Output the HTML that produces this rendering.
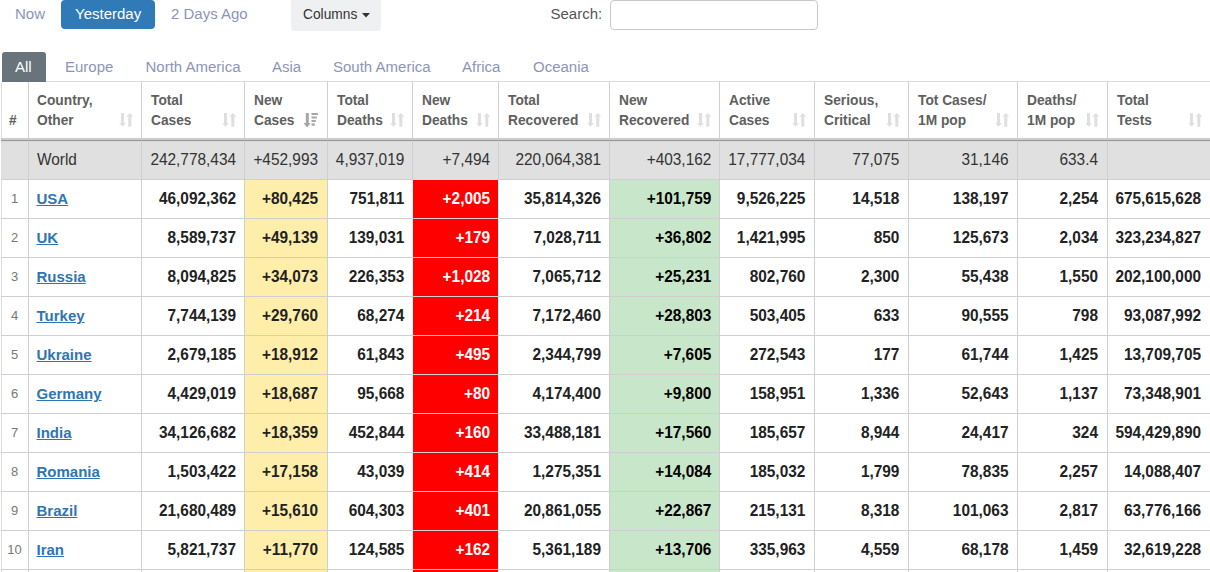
<!DOCTYPE html>
<html><head><meta charset="utf-8"><title>table</title>
<style>
html,body{margin:0;padding:0;background:#fff;}
body{width:1210px;height:572px;overflow:hidden;position:relative;font-family:"Liberation Sans",sans-serif;}
.a{position:absolute;white-space:nowrap;}
u{text-decoration:underline;text-underline-offset:1px;}
</style></head><body>
<div class="a" style="left:15px;top:5.30px;font-size:15px;line-height:18px;color:#8e94b8;font-weight:normal;transform:scaleY(1.03);transform-origin:0 14.20px;">Now</div>
<div class="a" style="left:61px;top:0px;width:94px;height:29px;background:#2f7ab7;border-radius:4px"></div>
<div class="a" style="left:75px;top:5.30px;font-size:15px;line-height:18px;color:#fff;font-weight:normal;transform:scaleY(1.03);transform-origin:0 14.20px;">Yesterday</div>
<div class="a" style="left:171px;top:5.30px;font-size:15px;line-height:18px;color:#8e94b8;font-weight:normal;transform:scaleY(1.03);transform-origin:0 14.20px;">2 Days Ago</div>
<div class="a" style="left:291px;top:-4px;width:90px;height:35px;background:#eff0f1;border-radius:4px"></div>
<div class="a" style="left:303px;top:7.24px;font-size:13.75px;line-height:16px;color:#333;font-weight:normal;transform:scaleY(1.03);transform-origin:0 12.76px;">Columns</div>
<svg class="a" style="left:362px;top:13px" width="8" height="5"><polygon points="0,0 8,0 4,4.5" fill="#333"/></svg>
<div class="a" style="left:550.5px;top:4.80px;font-size:15px;line-height:18px;color:#555;font-weight:normal;transform:scaleY(1.03);transform-origin:0 14.20px;">Search:</div>
<div class="a" style="left:610px;top:0px;width:206px;height:28px;border:1px solid #c8c8c8;border-radius:4px;background:#fff"></div>
<div class="a" style="left:2px;top:52px;width:44px;height:30px;background:#68737b;border-radius:3px 3px 0 0"></div>
<div class="a" style="left:15px;top:57.80px;font-size:15px;line-height:18px;color:#fff;font-weight:normal;transform:scaleY(1.03);transform-origin:0 14.20px;">All</div>
<div class="a" style="left:65px;top:57.80px;font-size:15px;line-height:18px;color:#8e94b8;font-weight:normal;transform:scaleY(1.03);transform-origin:0 14.20px;">Europe</div>
<div class="a" style="left:145.5px;top:57.80px;font-size:15px;line-height:18px;color:#8e94b8;font-weight:normal;transform:scaleY(1.03);transform-origin:0 14.20px;">North America</div>
<div class="a" style="left:272px;top:57.80px;font-size:15px;line-height:18px;color:#8e94b8;font-weight:normal;transform:scaleY(1.03);transform-origin:0 14.20px;">Asia</div>
<div class="a" style="left:333px;top:57.80px;font-size:15px;line-height:18px;color:#8e94b8;font-weight:normal;transform:scaleY(1.03);transform-origin:0 14.20px;">South America</div>
<div class="a" style="left:462px;top:57.80px;font-size:15px;line-height:18px;color:#8e94b8;font-weight:normal;transform:scaleY(1.03);transform-origin:0 14.20px;">Africa</div>
<div class="a" style="left:533px;top:57.80px;font-size:15px;line-height:18px;color:#8e94b8;font-weight:normal;transform:scaleY(1.03);transform-origin:0 14.20px;">Oceania</div>
<div class="a" style="left:1px;top:141px;width:1209px;height:38px;background:#e0e0e0;"></div>
<div class="a" style="left:245px;top:180px;width:82px;height:38px;background:#ffeeaa;"></div>
<div class="a" style="left:413px;top:180px;width:85px;height:38px;background:#ff0000;"></div>
<div class="a" style="left:610px;top:180px;width:109px;height:38px;background:#c8e6c9;"></div>
<div class="a" style="left:245px;top:219px;width:82px;height:38px;background:#ffeeaa;"></div>
<div class="a" style="left:413px;top:219px;width:85px;height:38px;background:#ff0000;"></div>
<div class="a" style="left:610px;top:219px;width:109px;height:38px;background:#c8e6c9;"></div>
<div class="a" style="left:245px;top:258px;width:82px;height:38px;background:#ffeeaa;"></div>
<div class="a" style="left:413px;top:258px;width:85px;height:38px;background:#ff0000;"></div>
<div class="a" style="left:610px;top:258px;width:109px;height:38px;background:#c8e6c9;"></div>
<div class="a" style="left:245px;top:297px;width:82px;height:38px;background:#ffeeaa;"></div>
<div class="a" style="left:413px;top:297px;width:85px;height:38px;background:#ff0000;"></div>
<div class="a" style="left:610px;top:297px;width:109px;height:38px;background:#c8e6c9;"></div>
<div class="a" style="left:245px;top:336px;width:82px;height:38px;background:#ffeeaa;"></div>
<div class="a" style="left:413px;top:336px;width:85px;height:38px;background:#ff0000;"></div>
<div class="a" style="left:610px;top:336px;width:109px;height:38px;background:#c8e6c9;"></div>
<div class="a" style="left:245px;top:375px;width:82px;height:38px;background:#ffeeaa;"></div>
<div class="a" style="left:413px;top:375px;width:85px;height:38px;background:#ff0000;"></div>
<div class="a" style="left:610px;top:375px;width:109px;height:38px;background:#c8e6c9;"></div>
<div class="a" style="left:245px;top:414px;width:82px;height:38px;background:#ffeeaa;"></div>
<div class="a" style="left:413px;top:414px;width:85px;height:38px;background:#ff0000;"></div>
<div class="a" style="left:610px;top:414px;width:109px;height:38px;background:#c8e6c9;"></div>
<div class="a" style="left:245px;top:453px;width:82px;height:38px;background:#ffeeaa;"></div>
<div class="a" style="left:413px;top:453px;width:85px;height:38px;background:#ff0000;"></div>
<div class="a" style="left:610px;top:453px;width:109px;height:38px;background:#c8e6c9;"></div>
<div class="a" style="left:245px;top:492px;width:82px;height:38px;background:#ffeeaa;"></div>
<div class="a" style="left:413px;top:492px;width:85px;height:38px;background:#ff0000;"></div>
<div class="a" style="left:610px;top:492px;width:109px;height:38px;background:#c8e6c9;"></div>
<div class="a" style="left:245px;top:531px;width:82px;height:38px;background:#ffeeaa;"></div>
<div class="a" style="left:413px;top:531px;width:85px;height:38px;background:#ff0000;"></div>
<div class="a" style="left:610px;top:531px;width:109px;height:38px;background:#c8e6c9;"></div>
<div class="a" style="left:245px;top:570px;width:82px;height:38px;background:#ffeeaa;"></div>
<div class="a" style="left:413px;top:570px;width:85px;height:38px;background:#ff0000;"></div>
<div class="a" style="left:610px;top:570px;width:109px;height:38px;background:#c8e6c9;"></div>
<div class="a" style="left:1px;top:82px;width:1px;height:490px;background:#dedede;"></div>
<div class="a" style="left:28px;top:82px;width:1px;height:490px;background:#cfcfcf;"></div>
<div class="a" style="left:141px;top:81px;width:1px;height:491px;background:#cfcfcf;"></div>
<div class="a" style="left:244px;top:81px;width:1px;height:491px;background:#cfcfcf;"></div>
<div class="a" style="left:327px;top:81px;width:1px;height:491px;background:#cfcfcf;"></div>
<div class="a" style="left:412px;top:81px;width:1px;height:99px;background:#cfcfcf;"></div>
<div class="a" style="left:412px;top:180px;width:1px;height:392px;background:#e6f4f4;"></div>
<div class="a" style="left:498px;top:81px;width:1px;height:99px;background:#cfcfcf;"></div>
<div class="a" style="left:498px;top:180px;width:1px;height:392px;background:#e6f4f4;"></div>
<div class="a" style="left:609px;top:81px;width:1px;height:491px;background:#cfcfcf;"></div>
<div class="a" style="left:719px;top:81px;width:1px;height:491px;background:#cfcfcf;"></div>
<div class="a" style="left:814px;top:81px;width:1px;height:491px;background:#cfcfcf;"></div>
<div class="a" style="left:908px;top:81px;width:1px;height:491px;background:#cfcfcf;"></div>
<div class="a" style="left:1017px;top:81px;width:1px;height:491px;background:#cfcfcf;"></div>
<div class="a" style="left:1107px;top:81px;width:1px;height:491px;background:#cfcfcf;"></div>
<div class="a" style="left:46px;top:81px;width:1164px;height:1px;background:#dcdcdc;"></div>
<div class="a" style="left:1px;top:138px;width:1209px;height:2px;background:#cccccc;"></div>
<div class="a" style="left:1px;top:140px;width:1209px;height:1px;background:#999999;"></div>
<div class="a" style="left:1px;top:141px;width:1209px;height:1px;background:#d9d9d9;"></div>
<div class="a" style="left:1px;top:179px;width:1209px;height:1px;background:#cfcfcf;"></div>
<div class="a" style="left:1px;top:218px;width:1209px;height:1px;background:#cfcfcf;"></div>
<div class="a" style="left:1px;top:257px;width:1209px;height:1px;background:#cfcfcf;"></div>
<div class="a" style="left:1px;top:296px;width:1209px;height:1px;background:#cfcfcf;"></div>
<div class="a" style="left:1px;top:335px;width:1209px;height:1px;background:#cfcfcf;"></div>
<div class="a" style="left:1px;top:374px;width:1209px;height:1px;background:#cfcfcf;"></div>
<div class="a" style="left:1px;top:413px;width:1209px;height:1px;background:#cfcfcf;"></div>
<div class="a" style="left:1px;top:452px;width:1209px;height:1px;background:#cfcfcf;"></div>
<div class="a" style="left:1px;top:491px;width:1209px;height:1px;background:#cfcfcf;"></div>
<div class="a" style="left:1px;top:530px;width:1209px;height:1px;background:#cfcfcf;"></div>
<div class="a" style="left:1px;top:569px;width:1209px;height:1px;background:#cfcfcf;"></div>
<div class="a" style="left:413px;top:179px;width:85px;height:1px;background:#d3e3e3;"></div>
<div class="a" style="left:9px;top:113.24px;font-size:13.75px;line-height:16px;color:#606060;font-weight:bold;">#</div>
<div class="a" style="left:37.0px;top:93.24px;font-size:13.75px;line-height:16px;color:#606060;font-weight:bold;">Country,</div>
<div class="a" style="left:37.0px;top:113.24px;font-size:13.75px;line-height:16px;color:#606060;font-weight:bold;">Other</div>
<svg class="a" style="left:119px;top:112px" width="15" height="16" viewBox="0 0 15 16"><rect x="2" y="1" width="3" height="11" fill="#dfdfdf"/><polygon points="0.3,11 6.9,11 3.5,14.8" fill="#dfdfdf"/><rect x="9.3" y="4.6" width="3" height="10.2" fill="#dfdfdf"/><polygon points="7.3,4.8 14.3,4.8 10.8,1" fill="#dfdfdf"/></svg>
<div class="a" style="left:151.0px;top:93.24px;font-size:13.75px;line-height:16px;color:#606060;font-weight:bold;">Total</div>
<div class="a" style="left:151.0px;top:113.24px;font-size:13.75px;line-height:16px;color:#606060;font-weight:bold;">Cases</div>
<svg class="a" style="left:222px;top:112px" width="15" height="16" viewBox="0 0 15 16"><rect x="2" y="1" width="3" height="11" fill="#dfdfdf"/><polygon points="0.3,11 6.9,11 3.5,14.8" fill="#dfdfdf"/><rect x="9.3" y="4.6" width="3" height="10.2" fill="#dfdfdf"/><polygon points="7.3,4.8 14.3,4.8 10.8,1" fill="#dfdfdf"/></svg>
<div class="a" style="left:254.0px;top:93.24px;font-size:13.75px;line-height:16px;color:#606060;font-weight:bold;">New</div>
<div class="a" style="left:254.0px;top:113.24px;font-size:13.75px;line-height:16px;color:#606060;font-weight:bold;">Cases</div>
<svg class="a" style="left:303px;top:112px" width="16" height="16" viewBox="0 0 16 16"><rect x="2.8" y="1" width="3" height="11" fill="#a6a6a6"/><polygon points="0.6,11 7.6,11 4.1,15.4" fill="#a3a3a3"/><rect x="8.5" y="1" width="6.4" height="2" fill="#a6a6a6"/><rect x="8.5" y="4.5" width="5.4" height="2" fill="#a6a6a6"/><rect x="8.5" y="8" width="4.3" height="2" fill="#a6a6a6"/><rect x="8.5" y="11.4" width="3.3" height="2.3" fill="#a6a6a6"/></svg>
<div class="a" style="left:337.0px;top:93.24px;font-size:13.75px;line-height:16px;color:#606060;font-weight:bold;">Total</div>
<div class="a" style="left:337.0px;top:113.24px;font-size:13.75px;line-height:16px;color:#606060;font-weight:bold;">Deaths</div>
<svg class="a" style="left:390px;top:112px" width="15" height="16" viewBox="0 0 15 16"><rect x="2" y="1" width="3" height="11" fill="#dfdfdf"/><polygon points="0.3,11 6.9,11 3.5,14.8" fill="#dfdfdf"/><rect x="9.3" y="4.6" width="3" height="10.2" fill="#dfdfdf"/><polygon points="7.3,4.8 14.3,4.8 10.8,1" fill="#dfdfdf"/></svg>
<div class="a" style="left:422.0px;top:93.24px;font-size:13.75px;line-height:16px;color:#606060;font-weight:bold;">New</div>
<div class="a" style="left:422.0px;top:113.24px;font-size:13.75px;line-height:16px;color:#606060;font-weight:bold;">Deaths</div>
<svg class="a" style="left:476px;top:112px" width="15" height="16" viewBox="0 0 15 16"><rect x="2" y="1" width="3" height="11" fill="#dfdfdf"/><polygon points="0.3,11 6.9,11 3.5,14.8" fill="#dfdfdf"/><rect x="9.3" y="4.6" width="3" height="10.2" fill="#dfdfdf"/><polygon points="7.3,4.8 14.3,4.8 10.8,1" fill="#dfdfdf"/></svg>
<div class="a" style="left:508.0px;top:93.24px;font-size:13.75px;line-height:16px;color:#606060;font-weight:bold;">Total</div>
<div class="a" style="left:508.0px;top:113.24px;font-size:13.75px;line-height:16px;color:#606060;font-weight:bold;">Recovered</div>
<svg class="a" style="left:587px;top:112px" width="15" height="16" viewBox="0 0 15 16"><rect x="2" y="1" width="3" height="11" fill="#dfdfdf"/><polygon points="0.3,11 6.9,11 3.5,14.8" fill="#dfdfdf"/><rect x="9.3" y="4.6" width="3" height="10.2" fill="#dfdfdf"/><polygon points="7.3,4.8 14.3,4.8 10.8,1" fill="#dfdfdf"/></svg>
<div class="a" style="left:619.0px;top:93.24px;font-size:13.75px;line-height:16px;color:#606060;font-weight:bold;">New</div>
<div class="a" style="left:619.0px;top:113.24px;font-size:13.75px;line-height:16px;color:#606060;font-weight:bold;">Recovered</div>
<svg class="a" style="left:697px;top:112px" width="15" height="16" viewBox="0 0 15 16"><rect x="2" y="1" width="3" height="11" fill="#dfdfdf"/><polygon points="0.3,11 6.9,11 3.5,14.8" fill="#dfdfdf"/><rect x="9.3" y="4.6" width="3" height="10.2" fill="#dfdfdf"/><polygon points="7.3,4.8 14.3,4.8 10.8,1" fill="#dfdfdf"/></svg>
<div class="a" style="left:729.0px;top:93.24px;font-size:13.75px;line-height:16px;color:#606060;font-weight:bold;">Active</div>
<div class="a" style="left:729.0px;top:113.24px;font-size:13.75px;line-height:16px;color:#606060;font-weight:bold;">Cases</div>
<svg class="a" style="left:792px;top:112px" width="15" height="16" viewBox="0 0 15 16"><rect x="2" y="1" width="3" height="11" fill="#dfdfdf"/><polygon points="0.3,11 6.9,11 3.5,14.8" fill="#dfdfdf"/><rect x="9.3" y="4.6" width="3" height="10.2" fill="#dfdfdf"/><polygon points="7.3,4.8 14.3,4.8 10.8,1" fill="#dfdfdf"/></svg>
<div class="a" style="left:824.0px;top:93.24px;font-size:13.75px;line-height:16px;color:#606060;font-weight:bold;">Serious,</div>
<div class="a" style="left:824.0px;top:113.24px;font-size:13.75px;line-height:16px;color:#606060;font-weight:bold;">Critical</div>
<svg class="a" style="left:886px;top:112px" width="15" height="16" viewBox="0 0 15 16"><rect x="2" y="1" width="3" height="11" fill="#dfdfdf"/><polygon points="0.3,11 6.9,11 3.5,14.8" fill="#dfdfdf"/><rect x="9.3" y="4.6" width="3" height="10.2" fill="#dfdfdf"/><polygon points="7.3,4.8 14.3,4.8 10.8,1" fill="#dfdfdf"/></svg>
<div class="a" style="left:918.0px;top:93.24px;font-size:13.75px;line-height:16px;color:#606060;font-weight:bold;">Tot Cases/</div>
<div class="a" style="left:918.0px;top:113.24px;font-size:13.75px;line-height:16px;color:#606060;font-weight:bold;">1M pop</div>
<svg class="a" style="left:995px;top:112px" width="15" height="16" viewBox="0 0 15 16"><rect x="2" y="1" width="3" height="11" fill="#dfdfdf"/><polygon points="0.3,11 6.9,11 3.5,14.8" fill="#dfdfdf"/><rect x="9.3" y="4.6" width="3" height="10.2" fill="#dfdfdf"/><polygon points="7.3,4.8 14.3,4.8 10.8,1" fill="#dfdfdf"/></svg>
<div class="a" style="left:1027.0px;top:93.24px;font-size:13.75px;line-height:16px;color:#606060;font-weight:bold;">Deaths/</div>
<div class="a" style="left:1027.0px;top:113.24px;font-size:13.75px;line-height:16px;color:#606060;font-weight:bold;">1M pop</div>
<svg class="a" style="left:1085px;top:112px" width="15" height="16" viewBox="0 0 15 16"><rect x="2" y="1" width="3" height="11" fill="#dfdfdf"/><polygon points="0.3,11 6.9,11 3.5,14.8" fill="#dfdfdf"/><rect x="9.3" y="4.6" width="3" height="10.2" fill="#dfdfdf"/><polygon points="7.3,4.8 14.3,4.8 10.8,1" fill="#dfdfdf"/></svg>
<div class="a" style="left:1117.0px;top:93.24px;font-size:13.75px;line-height:16px;color:#606060;font-weight:bold;">Total</div>
<div class="a" style="left:1117.0px;top:113.24px;font-size:13.75px;line-height:16px;color:#606060;font-weight:bold;">Tests</div>
<svg class="a" style="left:1188px;top:112px" width="15" height="16" viewBox="0 0 15 16"><rect x="2" y="1" width="3" height="11" fill="#dfdfdf"/><polygon points="0.3,11 6.9,11 3.5,14.8" fill="#dfdfdf"/><rect x="9.3" y="4.6" width="3" height="10.2" fill="#dfdfdf"/><polygon points="7.3,4.8 14.3,4.8 10.8,1" fill="#dfdfdf"/></svg>
<div class="a" style="left:37px;top:150.66px;font-size:15.4px;line-height:18px;color:#333;font-weight:normal;transform:scaleY(1.13);transform-origin:0 14.34px;">World</div>
<div class="a" style="right:974.00px;top:150.66px;font-size:15.4px;line-height:18px;color:#333;font-weight:normal;text-align:right;transform:scaleY(1.13);transform-origin:0 14.34px;">242,778,434</div>
<div class="a" style="right:892.00px;top:150.66px;font-size:15.4px;line-height:18px;color:#333;font-weight:normal;text-align:right;transform:scaleY(1.13);transform-origin:0 14.34px;">+452,993</div>
<div class="a" style="right:805.70px;top:150.66px;font-size:15.4px;line-height:18px;color:#333;font-weight:normal;text-align:right;transform:scaleY(1.13);transform-origin:0 14.34px;">4,937,019</div>
<div class="a" style="right:719.90px;top:150.66px;font-size:15.4px;line-height:18px;color:#333;font-weight:normal;text-align:right;transform:scaleY(1.13);transform-origin:0 14.34px;">+7,494</div>
<div class="a" style="right:609.00px;top:150.66px;font-size:15.4px;line-height:18px;color:#333;font-weight:normal;text-align:right;transform:scaleY(1.13);transform-origin:0 14.34px;">220,064,381</div>
<div class="a" style="right:498.70px;top:150.66px;font-size:15.4px;line-height:18px;color:#333;font-weight:normal;text-align:right;transform:scaleY(1.13);transform-origin:0 14.34px;">+403,162</div>
<div class="a" style="right:404.70px;top:150.66px;font-size:15.4px;line-height:18px;color:#333;font-weight:normal;text-align:right;transform:scaleY(1.13);transform-origin:0 14.34px;">17,777,034</div>
<div class="a" style="right:310.60px;top:150.66px;font-size:15.4px;line-height:18px;color:#333;font-weight:normal;text-align:right;transform:scaleY(1.13);transform-origin:0 14.34px;">77,075</div>
<div class="a" style="right:201.50px;top:150.66px;font-size:15.4px;line-height:18px;color:#333;font-weight:normal;text-align:right;transform:scaleY(1.13);transform-origin:0 14.34px;">31,146</div>
<div class="a" style="right:112.00px;top:150.66px;font-size:15.4px;line-height:18px;color:#333;font-weight:normal;text-align:right;transform:scaleY(1.13);transform-origin:0 14.34px;">633.4</div>
<div class="a" style="left:-35.5px;width:100px;text-align:center;top:190.50px;font-size:13px;line-height:16px;color:#777;font-weight:normal;">1</div>
<div class="a" style="left:36.5px;top:189.80px;font-size:15px;line-height:18px;color:#2e75b3;font-weight:bold;"><u>USA</u></div>
<div class="a" style="right:974.00px;top:189.66px;font-size:15.4px;line-height:18px;color:#222;font-weight:bold;text-align:right;transform:scaleY(1.13);transform-origin:0 14.34px;">46,092,362</div>
<div class="a" style="right:892.00px;top:189.66px;font-size:15.4px;line-height:18px;color:#222;font-weight:bold;text-align:right;transform:scaleY(1.13);transform-origin:0 14.34px;">+80,425</div>
<div class="a" style="right:805.70px;top:189.66px;font-size:15.4px;line-height:18px;color:#222;font-weight:bold;text-align:right;transform:scaleY(1.13);transform-origin:0 14.34px;">751,811</div>
<div class="a" style="right:719.90px;top:189.66px;font-size:15.4px;line-height:18px;color:#fff;font-weight:bold;text-align:right;transform:scaleY(1.13);transform-origin:0 14.34px;">+2,005</div>
<div class="a" style="right:609.00px;top:189.66px;font-size:15.4px;line-height:18px;color:#222;font-weight:bold;text-align:right;transform:scaleY(1.13);transform-origin:0 14.34px;">35,814,326</div>
<div class="a" style="right:498.70px;top:189.66px;font-size:15.4px;line-height:18px;color:#000;font-weight:bold;text-align:right;transform:scaleY(1.13);transform-origin:0 14.34px;">+101,759</div>
<div class="a" style="right:404.70px;top:189.66px;font-size:15.4px;line-height:18px;color:#222;font-weight:bold;text-align:right;transform:scaleY(1.13);transform-origin:0 14.34px;">9,526,225</div>
<div class="a" style="right:310.60px;top:189.66px;font-size:15.4px;line-height:18px;color:#222;font-weight:bold;text-align:right;transform:scaleY(1.13);transform-origin:0 14.34px;">14,518</div>
<div class="a" style="right:201.50px;top:189.66px;font-size:15.4px;line-height:18px;color:#222;font-weight:bold;text-align:right;transform:scaleY(1.13);transform-origin:0 14.34px;">138,197</div>
<div class="a" style="right:112.00px;top:189.66px;font-size:15.4px;line-height:18px;color:#222;font-weight:bold;text-align:right;transform:scaleY(1.13);transform-origin:0 14.34px;">2,254</div>
<div class="a" style="right:9.00px;top:189.66px;font-size:15.4px;line-height:18px;color:#222;font-weight:bold;text-align:right;transform:scaleY(1.13);transform-origin:0 14.34px;">675,615,628</div>
<div class="a" style="left:-35.5px;width:100px;text-align:center;top:229.50px;font-size:13px;line-height:16px;color:#777;font-weight:normal;">2</div>
<div class="a" style="left:36.5px;top:228.80px;font-size:15px;line-height:18px;color:#2e75b3;font-weight:bold;"><u>UK</u></div>
<div class="a" style="right:974.00px;top:228.66px;font-size:15.4px;line-height:18px;color:#222;font-weight:bold;text-align:right;transform:scaleY(1.13);transform-origin:0 14.34px;">8,589,737</div>
<div class="a" style="right:892.00px;top:228.66px;font-size:15.4px;line-height:18px;color:#222;font-weight:bold;text-align:right;transform:scaleY(1.13);transform-origin:0 14.34px;">+49,139</div>
<div class="a" style="right:805.70px;top:228.66px;font-size:15.4px;line-height:18px;color:#222;font-weight:bold;text-align:right;transform:scaleY(1.13);transform-origin:0 14.34px;">139,031</div>
<div class="a" style="right:719.90px;top:228.66px;font-size:15.4px;line-height:18px;color:#fff;font-weight:bold;text-align:right;transform:scaleY(1.13);transform-origin:0 14.34px;">+179</div>
<div class="a" style="right:609.00px;top:228.66px;font-size:15.4px;line-height:18px;color:#222;font-weight:bold;text-align:right;transform:scaleY(1.13);transform-origin:0 14.34px;">7,028,711</div>
<div class="a" style="right:498.70px;top:228.66px;font-size:15.4px;line-height:18px;color:#000;font-weight:bold;text-align:right;transform:scaleY(1.13);transform-origin:0 14.34px;">+36,802</div>
<div class="a" style="right:404.70px;top:228.66px;font-size:15.4px;line-height:18px;color:#222;font-weight:bold;text-align:right;transform:scaleY(1.13);transform-origin:0 14.34px;">1,421,995</div>
<div class="a" style="right:310.60px;top:228.66px;font-size:15.4px;line-height:18px;color:#222;font-weight:bold;text-align:right;transform:scaleY(1.13);transform-origin:0 14.34px;">850</div>
<div class="a" style="right:201.50px;top:228.66px;font-size:15.4px;line-height:18px;color:#222;font-weight:bold;text-align:right;transform:scaleY(1.13);transform-origin:0 14.34px;">125,673</div>
<div class="a" style="right:112.00px;top:228.66px;font-size:15.4px;line-height:18px;color:#222;font-weight:bold;text-align:right;transform:scaleY(1.13);transform-origin:0 14.34px;">2,034</div>
<div class="a" style="right:9.00px;top:228.66px;font-size:15.4px;line-height:18px;color:#222;font-weight:bold;text-align:right;transform:scaleY(1.13);transform-origin:0 14.34px;">323,234,827</div>
<div class="a" style="left:-35.5px;width:100px;text-align:center;top:268.50px;font-size:13px;line-height:16px;color:#777;font-weight:normal;">3</div>
<div class="a" style="left:36.5px;top:267.80px;font-size:15px;line-height:18px;color:#2e75b3;font-weight:bold;"><u>Russia</u></div>
<div class="a" style="right:974.00px;top:267.66px;font-size:15.4px;line-height:18px;color:#222;font-weight:bold;text-align:right;transform:scaleY(1.13);transform-origin:0 14.34px;">8,094,825</div>
<div class="a" style="right:892.00px;top:267.66px;font-size:15.4px;line-height:18px;color:#222;font-weight:bold;text-align:right;transform:scaleY(1.13);transform-origin:0 14.34px;">+34,073</div>
<div class="a" style="right:805.70px;top:267.66px;font-size:15.4px;line-height:18px;color:#222;font-weight:bold;text-align:right;transform:scaleY(1.13);transform-origin:0 14.34px;">226,353</div>
<div class="a" style="right:719.90px;top:267.66px;font-size:15.4px;line-height:18px;color:#fff;font-weight:bold;text-align:right;transform:scaleY(1.13);transform-origin:0 14.34px;">+1,028</div>
<div class="a" style="right:609.00px;top:267.66px;font-size:15.4px;line-height:18px;color:#222;font-weight:bold;text-align:right;transform:scaleY(1.13);transform-origin:0 14.34px;">7,065,712</div>
<div class="a" style="right:498.70px;top:267.66px;font-size:15.4px;line-height:18px;color:#000;font-weight:bold;text-align:right;transform:scaleY(1.13);transform-origin:0 14.34px;">+25,231</div>
<div class="a" style="right:404.70px;top:267.66px;font-size:15.4px;line-height:18px;color:#222;font-weight:bold;text-align:right;transform:scaleY(1.13);transform-origin:0 14.34px;">802,760</div>
<div class="a" style="right:310.60px;top:267.66px;font-size:15.4px;line-height:18px;color:#222;font-weight:bold;text-align:right;transform:scaleY(1.13);transform-origin:0 14.34px;">2,300</div>
<div class="a" style="right:201.50px;top:267.66px;font-size:15.4px;line-height:18px;color:#222;font-weight:bold;text-align:right;transform:scaleY(1.13);transform-origin:0 14.34px;">55,438</div>
<div class="a" style="right:112.00px;top:267.66px;font-size:15.4px;line-height:18px;color:#222;font-weight:bold;text-align:right;transform:scaleY(1.13);transform-origin:0 14.34px;">1,550</div>
<div class="a" style="right:9.00px;top:267.66px;font-size:15.4px;line-height:18px;color:#222;font-weight:bold;text-align:right;transform:scaleY(1.13);transform-origin:0 14.34px;">202,100,000</div>
<div class="a" style="left:-35.5px;width:100px;text-align:center;top:307.50px;font-size:13px;line-height:16px;color:#777;font-weight:normal;">4</div>
<div class="a" style="left:36.5px;top:306.80px;font-size:15px;line-height:18px;color:#2e75b3;font-weight:bold;"><u>Turkey</u></div>
<div class="a" style="right:974.00px;top:306.66px;font-size:15.4px;line-height:18px;color:#222;font-weight:bold;text-align:right;transform:scaleY(1.13);transform-origin:0 14.34px;">7,744,139</div>
<div class="a" style="right:892.00px;top:306.66px;font-size:15.4px;line-height:18px;color:#222;font-weight:bold;text-align:right;transform:scaleY(1.13);transform-origin:0 14.34px;">+29,760</div>
<div class="a" style="right:805.70px;top:306.66px;font-size:15.4px;line-height:18px;color:#222;font-weight:bold;text-align:right;transform:scaleY(1.13);transform-origin:0 14.34px;">68,274</div>
<div class="a" style="right:719.90px;top:306.66px;font-size:15.4px;line-height:18px;color:#fff;font-weight:bold;text-align:right;transform:scaleY(1.13);transform-origin:0 14.34px;">+214</div>
<div class="a" style="right:609.00px;top:306.66px;font-size:15.4px;line-height:18px;color:#222;font-weight:bold;text-align:right;transform:scaleY(1.13);transform-origin:0 14.34px;">7,172,460</div>
<div class="a" style="right:498.70px;top:306.66px;font-size:15.4px;line-height:18px;color:#000;font-weight:bold;text-align:right;transform:scaleY(1.13);transform-origin:0 14.34px;">+28,803</div>
<div class="a" style="right:404.70px;top:306.66px;font-size:15.4px;line-height:18px;color:#222;font-weight:bold;text-align:right;transform:scaleY(1.13);transform-origin:0 14.34px;">503,405</div>
<div class="a" style="right:310.60px;top:306.66px;font-size:15.4px;line-height:18px;color:#222;font-weight:bold;text-align:right;transform:scaleY(1.13);transform-origin:0 14.34px;">633</div>
<div class="a" style="right:201.50px;top:306.66px;font-size:15.4px;line-height:18px;color:#222;font-weight:bold;text-align:right;transform:scaleY(1.13);transform-origin:0 14.34px;">90,555</div>
<div class="a" style="right:112.00px;top:306.66px;font-size:15.4px;line-height:18px;color:#222;font-weight:bold;text-align:right;transform:scaleY(1.13);transform-origin:0 14.34px;">798</div>
<div class="a" style="right:9.00px;top:306.66px;font-size:15.4px;line-height:18px;color:#222;font-weight:bold;text-align:right;transform:scaleY(1.13);transform-origin:0 14.34px;">93,087,992</div>
<div class="a" style="left:-35.5px;width:100px;text-align:center;top:346.50px;font-size:13px;line-height:16px;color:#777;font-weight:normal;">5</div>
<div class="a" style="left:36.5px;top:345.80px;font-size:15px;line-height:18px;color:#2e75b3;font-weight:bold;"><u>Ukraine</u></div>
<div class="a" style="right:974.00px;top:345.66px;font-size:15.4px;line-height:18px;color:#222;font-weight:bold;text-align:right;transform:scaleY(1.13);transform-origin:0 14.34px;">2,679,185</div>
<div class="a" style="right:892.00px;top:345.66px;font-size:15.4px;line-height:18px;color:#222;font-weight:bold;text-align:right;transform:scaleY(1.13);transform-origin:0 14.34px;">+18,912</div>
<div class="a" style="right:805.70px;top:345.66px;font-size:15.4px;line-height:18px;color:#222;font-weight:bold;text-align:right;transform:scaleY(1.13);transform-origin:0 14.34px;">61,843</div>
<div class="a" style="right:719.90px;top:345.66px;font-size:15.4px;line-height:18px;color:#fff;font-weight:bold;text-align:right;transform:scaleY(1.13);transform-origin:0 14.34px;">+495</div>
<div class="a" style="right:609.00px;top:345.66px;font-size:15.4px;line-height:18px;color:#222;font-weight:bold;text-align:right;transform:scaleY(1.13);transform-origin:0 14.34px;">2,344,799</div>
<div class="a" style="right:498.70px;top:345.66px;font-size:15.4px;line-height:18px;color:#000;font-weight:bold;text-align:right;transform:scaleY(1.13);transform-origin:0 14.34px;">+7,605</div>
<div class="a" style="right:404.70px;top:345.66px;font-size:15.4px;line-height:18px;color:#222;font-weight:bold;text-align:right;transform:scaleY(1.13);transform-origin:0 14.34px;">272,543</div>
<div class="a" style="right:310.60px;top:345.66px;font-size:15.4px;line-height:18px;color:#222;font-weight:bold;text-align:right;transform:scaleY(1.13);transform-origin:0 14.34px;">177</div>
<div class="a" style="right:201.50px;top:345.66px;font-size:15.4px;line-height:18px;color:#222;font-weight:bold;text-align:right;transform:scaleY(1.13);transform-origin:0 14.34px;">61,744</div>
<div class="a" style="right:112.00px;top:345.66px;font-size:15.4px;line-height:18px;color:#222;font-weight:bold;text-align:right;transform:scaleY(1.13);transform-origin:0 14.34px;">1,425</div>
<div class="a" style="right:9.00px;top:345.66px;font-size:15.4px;line-height:18px;color:#222;font-weight:bold;text-align:right;transform:scaleY(1.13);transform-origin:0 14.34px;">13,709,705</div>
<div class="a" style="left:-35.5px;width:100px;text-align:center;top:385.50px;font-size:13px;line-height:16px;color:#777;font-weight:normal;">6</div>
<div class="a" style="left:36.5px;top:384.80px;font-size:15px;line-height:18px;color:#2e75b3;font-weight:bold;"><u>Germany</u></div>
<div class="a" style="right:974.00px;top:384.66px;font-size:15.4px;line-height:18px;color:#222;font-weight:bold;text-align:right;transform:scaleY(1.13);transform-origin:0 14.34px;">4,429,019</div>
<div class="a" style="right:892.00px;top:384.66px;font-size:15.4px;line-height:18px;color:#222;font-weight:bold;text-align:right;transform:scaleY(1.13);transform-origin:0 14.34px;">+18,687</div>
<div class="a" style="right:805.70px;top:384.66px;font-size:15.4px;line-height:18px;color:#222;font-weight:bold;text-align:right;transform:scaleY(1.13);transform-origin:0 14.34px;">95,668</div>
<div class="a" style="right:719.90px;top:384.66px;font-size:15.4px;line-height:18px;color:#fff;font-weight:bold;text-align:right;transform:scaleY(1.13);transform-origin:0 14.34px;">+80</div>
<div class="a" style="right:609.00px;top:384.66px;font-size:15.4px;line-height:18px;color:#222;font-weight:bold;text-align:right;transform:scaleY(1.13);transform-origin:0 14.34px;">4,174,400</div>
<div class="a" style="right:498.70px;top:384.66px;font-size:15.4px;line-height:18px;color:#000;font-weight:bold;text-align:right;transform:scaleY(1.13);transform-origin:0 14.34px;">+9,800</div>
<div class="a" style="right:404.70px;top:384.66px;font-size:15.4px;line-height:18px;color:#222;font-weight:bold;text-align:right;transform:scaleY(1.13);transform-origin:0 14.34px;">158,951</div>
<div class="a" style="right:310.60px;top:384.66px;font-size:15.4px;line-height:18px;color:#222;font-weight:bold;text-align:right;transform:scaleY(1.13);transform-origin:0 14.34px;">1,336</div>
<div class="a" style="right:201.50px;top:384.66px;font-size:15.4px;line-height:18px;color:#222;font-weight:bold;text-align:right;transform:scaleY(1.13);transform-origin:0 14.34px;">52,643</div>
<div class="a" style="right:112.00px;top:384.66px;font-size:15.4px;line-height:18px;color:#222;font-weight:bold;text-align:right;transform:scaleY(1.13);transform-origin:0 14.34px;">1,137</div>
<div class="a" style="right:9.00px;top:384.66px;font-size:15.4px;line-height:18px;color:#222;font-weight:bold;text-align:right;transform:scaleY(1.13);transform-origin:0 14.34px;">73,348,901</div>
<div class="a" style="left:-35.5px;width:100px;text-align:center;top:424.50px;font-size:13px;line-height:16px;color:#777;font-weight:normal;">7</div>
<div class="a" style="left:36.5px;top:423.80px;font-size:15px;line-height:18px;color:#2e75b3;font-weight:bold;"><u>India</u></div>
<div class="a" style="right:974.00px;top:423.66px;font-size:15.4px;line-height:18px;color:#222;font-weight:bold;text-align:right;transform:scaleY(1.13);transform-origin:0 14.34px;">34,126,682</div>
<div class="a" style="right:892.00px;top:423.66px;font-size:15.4px;line-height:18px;color:#222;font-weight:bold;text-align:right;transform:scaleY(1.13);transform-origin:0 14.34px;">+18,359</div>
<div class="a" style="right:805.70px;top:423.66px;font-size:15.4px;line-height:18px;color:#222;font-weight:bold;text-align:right;transform:scaleY(1.13);transform-origin:0 14.34px;">452,844</div>
<div class="a" style="right:719.90px;top:423.66px;font-size:15.4px;line-height:18px;color:#fff;font-weight:bold;text-align:right;transform:scaleY(1.13);transform-origin:0 14.34px;">+160</div>
<div class="a" style="right:609.00px;top:423.66px;font-size:15.4px;line-height:18px;color:#222;font-weight:bold;text-align:right;transform:scaleY(1.13);transform-origin:0 14.34px;">33,488,181</div>
<div class="a" style="right:498.70px;top:423.66px;font-size:15.4px;line-height:18px;color:#000;font-weight:bold;text-align:right;transform:scaleY(1.13);transform-origin:0 14.34px;">+17,560</div>
<div class="a" style="right:404.70px;top:423.66px;font-size:15.4px;line-height:18px;color:#222;font-weight:bold;text-align:right;transform:scaleY(1.13);transform-origin:0 14.34px;">185,657</div>
<div class="a" style="right:310.60px;top:423.66px;font-size:15.4px;line-height:18px;color:#222;font-weight:bold;text-align:right;transform:scaleY(1.13);transform-origin:0 14.34px;">8,944</div>
<div class="a" style="right:201.50px;top:423.66px;font-size:15.4px;line-height:18px;color:#222;font-weight:bold;text-align:right;transform:scaleY(1.13);transform-origin:0 14.34px;">24,417</div>
<div class="a" style="right:112.00px;top:423.66px;font-size:15.4px;line-height:18px;color:#222;font-weight:bold;text-align:right;transform:scaleY(1.13);transform-origin:0 14.34px;">324</div>
<div class="a" style="right:9.00px;top:423.66px;font-size:15.4px;line-height:18px;color:#222;font-weight:bold;text-align:right;transform:scaleY(1.13);transform-origin:0 14.34px;">594,429,890</div>
<div class="a" style="left:-35.5px;width:100px;text-align:center;top:463.50px;font-size:13px;line-height:16px;color:#777;font-weight:normal;">8</div>
<div class="a" style="left:36.5px;top:462.80px;font-size:15px;line-height:18px;color:#2e75b3;font-weight:bold;"><u>Romania</u></div>
<div class="a" style="right:974.00px;top:462.66px;font-size:15.4px;line-height:18px;color:#222;font-weight:bold;text-align:right;transform:scaleY(1.13);transform-origin:0 14.34px;">1,503,422</div>
<div class="a" style="right:892.00px;top:462.66px;font-size:15.4px;line-height:18px;color:#222;font-weight:bold;text-align:right;transform:scaleY(1.13);transform-origin:0 14.34px;">+17,158</div>
<div class="a" style="right:805.70px;top:462.66px;font-size:15.4px;line-height:18px;color:#222;font-weight:bold;text-align:right;transform:scaleY(1.13);transform-origin:0 14.34px;">43,039</div>
<div class="a" style="right:719.90px;top:462.66px;font-size:15.4px;line-height:18px;color:#fff;font-weight:bold;text-align:right;transform:scaleY(1.13);transform-origin:0 14.34px;">+414</div>
<div class="a" style="right:609.00px;top:462.66px;font-size:15.4px;line-height:18px;color:#222;font-weight:bold;text-align:right;transform:scaleY(1.13);transform-origin:0 14.34px;">1,275,351</div>
<div class="a" style="right:498.70px;top:462.66px;font-size:15.4px;line-height:18px;color:#000;font-weight:bold;text-align:right;transform:scaleY(1.13);transform-origin:0 14.34px;">+14,084</div>
<div class="a" style="right:404.70px;top:462.66px;font-size:15.4px;line-height:18px;color:#222;font-weight:bold;text-align:right;transform:scaleY(1.13);transform-origin:0 14.34px;">185,032</div>
<div class="a" style="right:310.60px;top:462.66px;font-size:15.4px;line-height:18px;color:#222;font-weight:bold;text-align:right;transform:scaleY(1.13);transform-origin:0 14.34px;">1,799</div>
<div class="a" style="right:201.50px;top:462.66px;font-size:15.4px;line-height:18px;color:#222;font-weight:bold;text-align:right;transform:scaleY(1.13);transform-origin:0 14.34px;">78,835</div>
<div class="a" style="right:112.00px;top:462.66px;font-size:15.4px;line-height:18px;color:#222;font-weight:bold;text-align:right;transform:scaleY(1.13);transform-origin:0 14.34px;">2,257</div>
<div class="a" style="right:9.00px;top:462.66px;font-size:15.4px;line-height:18px;color:#222;font-weight:bold;text-align:right;transform:scaleY(1.13);transform-origin:0 14.34px;">14,088,407</div>
<div class="a" style="left:-35.5px;width:100px;text-align:center;top:502.50px;font-size:13px;line-height:16px;color:#777;font-weight:normal;">9</div>
<div class="a" style="left:36.5px;top:501.80px;font-size:15px;line-height:18px;color:#2e75b3;font-weight:bold;"><u>Brazil</u></div>
<div class="a" style="right:974.00px;top:501.66px;font-size:15.4px;line-height:18px;color:#222;font-weight:bold;text-align:right;transform:scaleY(1.13);transform-origin:0 14.34px;">21,680,489</div>
<div class="a" style="right:892.00px;top:501.66px;font-size:15.4px;line-height:18px;color:#222;font-weight:bold;text-align:right;transform:scaleY(1.13);transform-origin:0 14.34px;">+15,610</div>
<div class="a" style="right:805.70px;top:501.66px;font-size:15.4px;line-height:18px;color:#222;font-weight:bold;text-align:right;transform:scaleY(1.13);transform-origin:0 14.34px;">604,303</div>
<div class="a" style="right:719.90px;top:501.66px;font-size:15.4px;line-height:18px;color:#fff;font-weight:bold;text-align:right;transform:scaleY(1.13);transform-origin:0 14.34px;">+401</div>
<div class="a" style="right:609.00px;top:501.66px;font-size:15.4px;line-height:18px;color:#222;font-weight:bold;text-align:right;transform:scaleY(1.13);transform-origin:0 14.34px;">20,861,055</div>
<div class="a" style="right:498.70px;top:501.66px;font-size:15.4px;line-height:18px;color:#000;font-weight:bold;text-align:right;transform:scaleY(1.13);transform-origin:0 14.34px;">+22,867</div>
<div class="a" style="right:404.70px;top:501.66px;font-size:15.4px;line-height:18px;color:#222;font-weight:bold;text-align:right;transform:scaleY(1.13);transform-origin:0 14.34px;">215,131</div>
<div class="a" style="right:310.60px;top:501.66px;font-size:15.4px;line-height:18px;color:#222;font-weight:bold;text-align:right;transform:scaleY(1.13);transform-origin:0 14.34px;">8,318</div>
<div class="a" style="right:201.50px;top:501.66px;font-size:15.4px;line-height:18px;color:#222;font-weight:bold;text-align:right;transform:scaleY(1.13);transform-origin:0 14.34px;">101,063</div>
<div class="a" style="right:112.00px;top:501.66px;font-size:15.4px;line-height:18px;color:#222;font-weight:bold;text-align:right;transform:scaleY(1.13);transform-origin:0 14.34px;">2,817</div>
<div class="a" style="right:9.00px;top:501.66px;font-size:15.4px;line-height:18px;color:#222;font-weight:bold;text-align:right;transform:scaleY(1.13);transform-origin:0 14.34px;">63,776,166</div>
<div class="a" style="left:-35.5px;width:100px;text-align:center;top:541.50px;font-size:13px;line-height:16px;color:#777;font-weight:normal;">10</div>
<div class="a" style="left:36.5px;top:540.80px;font-size:15px;line-height:18px;color:#2e75b3;font-weight:bold;"><u>Iran</u></div>
<div class="a" style="right:974.00px;top:540.66px;font-size:15.4px;line-height:18px;color:#222;font-weight:bold;text-align:right;transform:scaleY(1.13);transform-origin:0 14.34px;">5,821,737</div>
<div class="a" style="right:892.00px;top:540.66px;font-size:15.4px;line-height:18px;color:#222;font-weight:bold;text-align:right;transform:scaleY(1.13);transform-origin:0 14.34px;">+11,770</div>
<div class="a" style="right:805.70px;top:540.66px;font-size:15.4px;line-height:18px;color:#222;font-weight:bold;text-align:right;transform:scaleY(1.13);transform-origin:0 14.34px;">124,585</div>
<div class="a" style="right:719.90px;top:540.66px;font-size:15.4px;line-height:18px;color:#fff;font-weight:bold;text-align:right;transform:scaleY(1.13);transform-origin:0 14.34px;">+162</div>
<div class="a" style="right:609.00px;top:540.66px;font-size:15.4px;line-height:18px;color:#222;font-weight:bold;text-align:right;transform:scaleY(1.13);transform-origin:0 14.34px;">5,361,189</div>
<div class="a" style="right:498.70px;top:540.66px;font-size:15.4px;line-height:18px;color:#000;font-weight:bold;text-align:right;transform:scaleY(1.13);transform-origin:0 14.34px;">+13,706</div>
<div class="a" style="right:404.70px;top:540.66px;font-size:15.4px;line-height:18px;color:#222;font-weight:bold;text-align:right;transform:scaleY(1.13);transform-origin:0 14.34px;">335,963</div>
<div class="a" style="right:310.60px;top:540.66px;font-size:15.4px;line-height:18px;color:#222;font-weight:bold;text-align:right;transform:scaleY(1.13);transform-origin:0 14.34px;">4,559</div>
<div class="a" style="right:201.50px;top:540.66px;font-size:15.4px;line-height:18px;color:#222;font-weight:bold;text-align:right;transform:scaleY(1.13);transform-origin:0 14.34px;">68,178</div>
<div class="a" style="right:112.00px;top:540.66px;font-size:15.4px;line-height:18px;color:#222;font-weight:bold;text-align:right;transform:scaleY(1.13);transform-origin:0 14.34px;">1,459</div>
<div class="a" style="right:9.00px;top:540.66px;font-size:15.4px;line-height:18px;color:#222;font-weight:bold;text-align:right;transform:scaleY(1.13);transform-origin:0 14.34px;">32,619,228</div>
</body></html>
